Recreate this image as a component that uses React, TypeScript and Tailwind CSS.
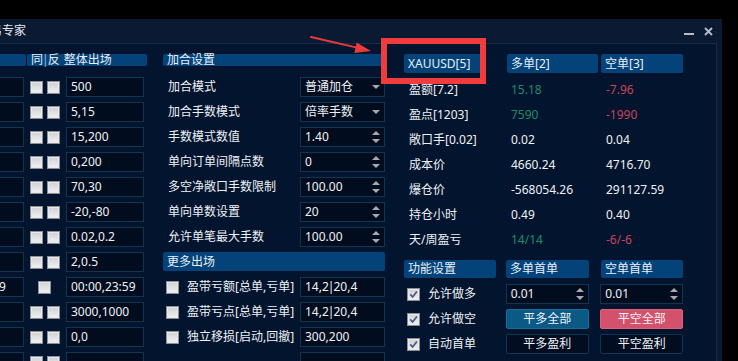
import React from 'react'

type Kids = { children?: React.ReactNode }

function CheckBox({ checked }: { checked?: boolean }) {
  return (
    <div className="w-[13px] h-[13px] shrink-0 border border-[#8f9095] bg-gradient-to-b from-[#cfd0d3] to-[#f3f3f4] shadow-[inset_0_0_0_1px_#e9e9ea] flex items-center justify-center">
      {checked && (
        <svg width="9" height="9" viewBox="0 0 9 9">
          <path d="M1.2 4.4 L3.6 6.9 L7.9 1.4" fill="none" stroke="#45568a" strokeWidth="1.7" />
        </svg>
      )}
    </div>
  )
}

function Caret({ up }: { up?: boolean }) {
  return (
    <svg width="8" height="4" viewBox="0 0 8 4">
      <path d={up ? 'M0 4 L4 0 L8 4Z' : 'M0 0 L8 0 L4 4Z'} fill="#a7a9ae" />
    </svg>
  )
}

function Select({ value }: { value: string }) {
  return (
    <div className="w-[85px] h-[20px] border border-[#0f3650] bg-[#020c1f] flex items-center justify-between pl-[4px] pr-[4px] text-[#eef2f6]">
      <span>{value}</span>
      <Caret />
    </div>
  )
}

function Spin({ value, w83 }: { value: string; w83?: boolean }) {
  return (
    <div
      className={
        (w83 ? 'w-[83px] ' : 'w-[85px] ') +
        'h-[20px] border border-[#0f3650] bg-[#020c1f] flex items-center justify-between pl-[4px] pr-[4px] text-[#eef2f6]'
      }
    >
      <span>{value}</span>
      <div className="flex flex-col gap-[4px]">
        <Caret up />
        <Caret />
      </div>
    </div>
  )
}

function Field({ value }: { value: string }) {
  const parts = value.split('|')
  return (
    <div className="w-[85px] h-[20px] border border-[#0f3650] bg-[#020c1f] flex items-center pl-[4px] text-[#eef2f6]">
      {parts.length === 2 ? (
        <>
          <span>{parts[0]}</span>
          <span className="-mx-[1px]">|</span>
          <span>{parts[1]}</span>
        </>
      ) : (
        value
      )}
    </div>
  )
}

function Header({ children }: Kids) {
  return <div className="h-[19px] bg-[#03437a] rounded-[2px] flex items-center pl-[4px] text-[#e9eff6]">{children}</div>
}

const leftRows: { v: string; single?: boolean; pre?: string }[] = [
  { v: '500' },
  { v: '5,15' },
  { v: '15,200' },
  { v: '0,200' },
  { v: '70,30' },
  { v: '-20,-80' },
  { v: '0.02,0.2' },
  { v: '2,0.5' },
  { v: '00:00,23:59', single: true, pre: '9' },
  { v: '3000,1000' },
  { v: '0,0' },
  { v: '' },
]

const midRows: { label: string; kind: 'sel' | 'spin'; v: string }[] = [
  { label: '加合模式', kind: 'sel', v: '普通加仓' },
  { label: '加合手数模式', kind: 'sel', v: '倍率手数' },
  { label: '手数模式数值', kind: 'spin', v: '1.40' },
  { label: '单向订单间隔点数', kind: 'spin', v: '0' },
  { label: '多空净敞口手数限制', kind: 'spin', v: '100.00' },
  { label: '单向单数设置', kind: 'spin', v: '20' },
  { label: '允许单笔最大手数', kind: 'spin', v: '100.00' },
]

const moreRows = [
  { label: '盈带亏额[总单,亏单]', v: '14,2|20,4' },
  { label: '盈带亏点[总单,亏单]', v: '14,2|20,4' },
  { label: '独立移损[启动,回撤]', v: '300,200' },
  { label: '', v: '' },
]

const G = 'text-[#1e8d6c]'
const R = 'text-[#c9455b]'
const W = 'text-[#eef2f6]'

const stats: { label: string; a: string; b: string; ca: string; cb: string }[] = [
  { label: '盈额[7.2]', a: '15.18', b: '-7.96', ca: G, cb: R },
  { label: '盈点[1203]', a: '7590', b: '-1990', ca: G, cb: R },
  { label: '敞口手[0.02]', a: '0.02', b: '0.04', ca: W, cb: W },
  { label: '成本价', a: '4660.24', b: '4716.70', ca: W, cb: W },
  { label: '爆仓价', a: '-568054.26', b: '291127.59', ca: W, cb: W },
  { label: '持仓小时', a: '0.49', b: '0.40', ca: W, cb: W },
  { label: '天/周盈亏', a: '14/14', b: '-6/-6', ca: G, cb: R },
]

export default function App() {
  return (
    <div className="relative w-[738px] h-[361px] overflow-hidden bg-black text-[12px] leading-none text-[#eef2f6] font-['Noto_Sans','Noto_Sans_CJK_SC',sans-serif]">
      <div className="mt-[19px] w-[722px] h-[342px] bg-[#0b1a33] flex flex-col">
        {/* title bar */}
        <div className="h-[24px] shrink-0 flex items-center justify-between">
          <span className="-ml-[22px] text-[#e6e9ee]">交易专家</span>
          <div className="flex items-center gap-[10px] pr-[9px]">
            <div className="w-[10px] h-[2px] bg-[#b9bcc2] mt-[6px]" />
            <svg width="9" height="9" viewBox="0 0 9 9">
              <path d="M1 1 L8 8 M8 1 L1 8" stroke="#b9bcc2" strokeWidth="1.8" />
            </svg>
          </div>
        </div>

        {/* content */}
        <div className="flex-1 min-h-0 mr-[5px] border-t border-r border-[#1b2b47] bg-[#03142e] flex pt-[10px] overflow-hidden">
          {/* left column */}
          <div className="w-[147px] shrink-0 flex flex-col">
            <div className="flex h-[19px] text-[#e9eff6]">
              <div className="w-[26px] bg-[#03437a] rounded-r-[2px]" />
              <div className="ml-[1px] flex-1 bg-[#03437a] rounded-[2px] flex items-center pl-[4px]">
                <span>同</span>
                <span className="-mx-[1px] text-[#8fc3ea]">|</span>
                <span>反</span>
                <span className="ml-[4px]">整体出场</span>
              </div>
            </div>
            <div className="mt-[11px] flex flex-col gap-[5px]">
              {leftRows.map((r, i) => (
                <div key={i} className="h-[20px] flex items-center">
                  <div className="w-[24px] h-[20px] border border-l-0 border-[#0f3650] bg-[#020c1f] flex items-center text-[#eef2f6]">
                    {r.pre && <span className="-ml-[1px]">{r.pre}</span>}
                  </div>
                  {r.single ? (
                    <div className="w-[42px] flex justify-center pr-[1px]">
                      <CheckBox />
                    </div>
                  ) : (
                    <div className="w-[42px] flex items-center gap-[4px] pl-[6px]">
                      <CheckBox />
                      <CheckBox />
                    </div>
                  )}
                  <div className="w-[78px] h-[20px] border border-[#0f3650] bg-[#020c1f] flex items-center pl-[4px]">
                    {r.v}
                  </div>
                </div>
              ))}
            </div>
          </div>

          {/* middle column */}
          <div className="ml-[16px] w-[222px] shrink-0 flex flex-col">
            <Header>加合设置</Header>
            <div className="mt-[11px] flex flex-col gap-[5px]">
              {midRows.map((r) => (
                <div key={r.label} className="h-[20px] flex items-center justify-between pl-[5px]">
                  <span>{r.label}</span>
                  {r.kind === 'sel' ? <Select value={r.v} /> : <Spin value={r.v} />}
                </div>
              ))}
            </div>
            <div className="mt-[5px]">
              <Header>更多出场</Header>
            </div>
            <div className="mt-[6px] flex flex-col gap-[5px]">
              {moreRows.map((r, i) => (
                <div key={i} className="h-[20px] flex items-center justify-between pl-[3px]">
                  <div className="flex items-center gap-[8px]">
                    {r.label && <CheckBox />}
                    <span>{r.label}</span>
                  </div>
                  <Field value={r.v} />
                </div>
              ))}
            </div>
          </div>

          {/* right column */}
          <div className="ml-[19px] w-[279px] shrink-0 flex flex-col">
            <div className="flex h-[19px]">
              <div className="w-[103px]">
                <div className="w-[78px] h-[19px] bg-[#03437a] rounded-[2px] flex items-center pl-[4px] text-[#e9eff6]">XAUUSD[5]</div>
              </div>
              <div className="w-[94px]">
                <div className="w-[91px] h-[19px] bg-[#03437a] rounded-[2px] flex items-center pl-[4px] text-[#e9eff6]">多单[2]</div>
              </div>
              <div className="w-[82px] h-[19px] bg-[#03437a] rounded-[2px] flex items-center pl-[4px] text-[#e9eff6]">空单[3]</div>
            </div>
            <div className="mt-[4px] flex flex-col">
              {stats.map((s) => (
                <div key={s.label} className="h-[25px] flex items-center">
                  <div className="w-[103px] pl-[5px]">{s.label}</div>
                  <div className={'w-[94px] pl-[4px] ' + s.ca}>{s.a}</div>
                  <div className={'w-[82px] pl-[5px] ' + s.cb}>{s.b}</div>
                </div>
              ))}
            </div>
            <div className="mt-[8px] flex h-[18px]">
              <div className="w-[102px]">
                <div className="w-[92px] h-[18px] bg-[#03437a] rounded-[2px] flex items-center pl-[4px] text-[#e9eff6]">功能设置</div>
              </div>
              <div className="w-[95px]">
                <div className="w-[83px] h-[18px] bg-[#03437a] rounded-[2px] flex items-center pl-[4px] text-[#e9eff6]">多单首单</div>
              </div>
              <div className="w-[82px] h-[18px] bg-[#03437a] rounded-[2px] flex items-center pl-[4px] text-[#e9eff6]">空单首单</div>
            </div>
            <div className="mt-[6px] flex flex-col gap-[5px]">
              <div className="h-[20px] flex items-center">
                <div className="w-[102px] flex items-center gap-[8px] pl-[3px]">
                  <CheckBox checked />
                  <span>允许做多</span>
                </div>
                <div className="w-[95px]">
                  <Spin value="0.01" w83 />
                </div>
                <Spin value="0.01" w83 />
              </div>
              <div className="h-[20px] flex items-center">
                <div className="w-[102px] flex items-center gap-[8px] pl-[3px]">
                  <CheckBox checked />
                  <span>允许做空</span>
                </div>
                <div className="w-[95px]">
                  <div className="w-[83px] h-[20px] rounded-[2px] bg-[#0b5a86] border border-[#1a6a96] flex items-center justify-center">平多全部</div>
                </div>
                <div className="w-[83px] h-[20px] rounded-[2px] bg-[#d4516b] border border-[#dc6179] flex items-center justify-center">平空全部</div>
              </div>
              <div className="h-[20px] flex items-center">
                <div className="w-[102px] flex items-center gap-[8px] pl-[3px]">
                  <CheckBox checked />
                  <span>自动首单</span>
                </div>
                <div className="w-[95px]">
                  <div className="w-[83px] h-[20px] rounded-[2px] bg-[#020d22] border border-[#0f3650] flex items-center justify-center">平多盈利</div>
                </div>
                <div className="w-[83px] h-[20px] rounded-[2px] bg-[#020d22] border border-[#0f3650] flex items-center justify-center">平空盈利</div>
              </div>
            </div>
          </div>
        </div>
      </div>

      {/* annotation: arrow + red box */}
      <svg className="absolute left-0 top-0 pointer-events-none" width="738" height="361" viewBox="0 0 738 361">
        <path d="M311 37 L357 47.6" stroke="#ea3a3a" strokeWidth="2" strokeLinecap="round" />
        <path d="M371 51 L356.6 42.6 L354.4 53" fill="#ea3a3a" />
      </svg>
      <div className="absolute left-[381px] top-[38px] w-[105px] h-[46px] border-[6px] border-[#f03c3c] pointer-events-none" />
    </div>
  )
}
